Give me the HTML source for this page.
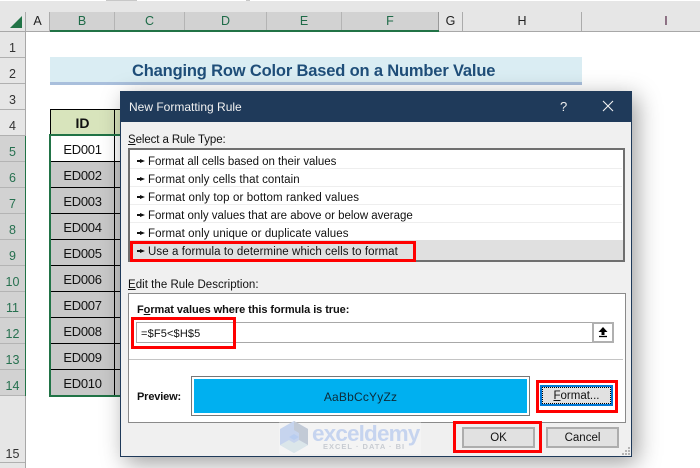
<!DOCTYPE html>
<html><head><meta charset="utf-8"><style>
html,body{margin:0;padding:0}
body{width:700px;height:468px;overflow:hidden;background:#fff;position:relative;font-family:"Liberation Sans",sans-serif}
div{position:absolute;box-sizing:border-box;white-space:nowrap}
.ch{top:12px;height:19px;background:#e6e6e6;border-right:1px solid #ababab;text-align:center;font-size:12.5px;line-height:19px;color:#222}
.s{background:#d2d2d2;color:#1f6b48;border-right:1px solid #b4b4b4}
.rh{left:0;width:25px;background:#e6e6e6;border-bottom:1px solid #b0b0b0;text-align:center;font-size:12.5px;color:#333;padding-top:8px;line-height:17px}
.rs{background:#d2d2d2;color:#26704f;border-bottom:1px solid #b4b4b4}
.cell{left:51px;width:63px;height:26px;background:#c8c8c8;border-bottom:1px solid #000;text-align:center;font-size:13px;line-height:27px;color:#111;letter-spacing:-.3px}
.c2{left:114px;width:6px;height:26px;background:#c8c8c8;border-left:1px solid #000;border-bottom:1px solid #000}
.t{font-size:11.5px;color:#111;line-height:14px}
.li{left:148px;height:18px;line-height:18px;font-size:11.5px;color:#111}
.sep{left:130px;width:492px;height:1px;background:#eee}
.red{border:3px solid #f00;background:transparent}
.btn{background:#e1e1e1;border:2px solid #adadad;text-align:center;font-size:11.5px;line-height:19px;color:#111}
</style></head><body>
<!-- top strip -->
<div style="left:0;top:0;width:700px;height:12px;background:#e6e6e6"></div>
<div style="left:0;top:0;width:700px;height:1px;background:#c8c8c8"></div>
<div style="left:0;top:0;width:106px;height:1px;background:#fff"></div>
<div style="left:137px;top:0;width:109px;height:1px;background:#fff"></div>
<div style="left:250px;top:0;width:450px;height:1px;background:#fff"></div>
<div style="left:0;top:12px;width:26px;height:19px;background:#e6e6e6;border-right:1px solid #ababab"></div>
<svg style="position:absolute;left:10px;top:16px" width="12" height="12"><path d="M12 0V12H0Z" fill="#217346"/></svg>
<div class="ch" style="left:26px;width:24px">A</div>
<div class="ch s" style="left:50px;width:65px">B</div>
<div class="ch s" style="left:115px;width:70px">C</div>
<div class="ch s" style="left:185px;width:82px">D</div>
<div class="ch s" style="left:267px;width:75px">E</div>
<div class="ch s" style="left:342px;width:97px;border-right:1px solid #999">F</div>
<div class="ch" style="left:439px;width:24px">G</div>
<div class="ch" style="left:463px;width:119px">H</div>
<div class="ch" style="left:582px;width:118px;border-right:0;padding-left:50px;color:#502040">I</div>
<div style="left:0;top:31px;width:700px;height:1px;background:#a8a8a8"></div>
<div style="left:50px;top:30px;width:389px;height:2px;background:#217346"></div>
<!-- row headers -->
<div class="rh" style="top:32px;height:26px">1</div>
<div class="rh" style="top:58px;height:26px">2</div>
<div class="rh" style="top:84px;height:26px">3</div>
<div class="rh" style="top:110px;height:26px">4</div>
<div class="rh rs" style="top:136px;height:26px">5</div>
<div class="rh rs" style="top:162px;height:26px">6</div>
<div class="rh rs" style="top:188px;height:26px">7</div>
<div class="rh rs" style="top:214px;height:26px">8</div>
<div class="rh rs" style="top:240px;height:26px">9</div>
<div class="rh rs" style="top:266px;height:26px">10</div>
<div class="rh rs" style="top:292px;height:26px">11</div>
<div class="rh rs" style="top:318px;height:26px">12</div>
<div class="rh rs" style="top:344px;height:26px">13</div>
<div class="rh rs" style="top:370px;height:26px">14</div>
<div class="rh" style="top:396px;height:67px;padding-top:50px">15</div>
<div class="rh" style="top:463px;height:5px;border:0;padding:0"></div>
<div style="left:25px;top:32px;width:1px;height:436px;background:#a8a8a8"></div>
<div style="left:24.5px;top:136px;width:1.5px;height:260px;background:#217346"></div>
<!-- title band -->
<div style="left:50px;top:57px;width:532px;height:28px;background:#daedf3;border-bottom:3px solid #a9bfdc"></div>
<div style="left:132px;top:57px;height:28px;font-size:16.5px;font-weight:bold;line-height:29px;color:#1f4e79;letter-spacing:-.17px">Changing Row Color Based on a Number Value</div>
<!-- table -->
<div style="left:50px;top:109px;width:65px;height:27px;background:#d8e4bc;border:1px solid #000;text-align:center;font-weight:bold;font-size:14px;line-height:27px;color:#111">ID</div>
<div style="left:114px;top:109px;width:8px;height:27px;background:#d8e4bc;border:1px solid #000;border-right:0"></div>
<div class="cell" style="top:136px;background:#fff">ED001</div><div class="c2" style="top:136px;background:#fff"></div>
<div class="cell" style="top:162px">ED002</div><div class="c2" style="top:162px"></div>
<div class="cell" style="top:188px">ED003</div><div class="c2" style="top:188px"></div>
<div class="cell" style="top:214px">ED004</div><div class="c2" style="top:214px"></div>
<div class="cell" style="top:240px">ED005</div><div class="c2" style="top:240px"></div>
<div class="cell" style="top:266px">ED006</div><div class="c2" style="top:266px"></div>
<div class="cell" style="top:292px">ED007</div><div class="c2" style="top:292px"></div>
<div class="cell" style="top:318px">ED008</div><div class="c2" style="top:318px"></div>
<div class="cell" style="top:344px">ED009</div><div class="c2" style="top:344px"></div>
<div class="cell" style="top:370px">ED010</div><div class="c2" style="top:370px"></div>
<div style="left:49px;top:134px;width:73px;height:263px;border:2px solid #217346;border-right:0"></div>
<!-- dialog -->
<div style="left:120px;top:91px;width:512px;height:366px;background:#f0f0f0;border:1px solid #1f3a5a;box-shadow:5px 6px 22px rgba(0,0,0,.38)"></div>
<div style="left:120px;top:91px;width:512px;height:31px;background:#1f3a5a;color:#f2f2f2;font-size:12px;line-height:33px;padding-left:9px">New Formatting Rule</div>
<div style="left:560px;top:91px;height:31px;line-height:31px;font-size:13px;color:#eee">?</div>
<svg style="position:absolute;left:602px;top:100px" width="12" height="12"><path d="M1 1L11 11M11 1L1 11" stroke="#f2f2f2" stroke-width="1.1" fill="none"/></svg>
<div class="t" style="left:128px;top:133px;letter-spacing:-.1px"><u>S</u>elect a Rule Type:</div>
<div style="left:127.5px;top:148px;width:497.5px;height:114px;background:#fff;border:2px solid #6f6f6f"></div>
<div style="left:130px;top:240px;width:493px;height:20px;background:#e0e0e0"></div>
<div class="sep" style="top:168px"></div><div class="sep" style="top:186px"></div><div class="sep" style="top:204px"></div><div class="sep" style="top:222px"></div>
<svg style="position:absolute;left:137px;top:158px" width="8" height="7"><path d="M0 2H3V1L8 3L3 5V4H0Z" fill="#111"/></svg>
<svg style="position:absolute;left:137px;top:176px" width="8" height="7"><path d="M0 2H3V1L8 3L3 5V4H0Z" fill="#111"/></svg>
<svg style="position:absolute;left:137px;top:194px" width="8" height="7"><path d="M0 2H3V1L8 3L3 5V4H0Z" fill="#111"/></svg>
<svg style="position:absolute;left:137px;top:212px" width="8" height="7"><path d="M0 2H3V1L8 3L3 5V4H0Z" fill="#111"/></svg>
<svg style="position:absolute;left:137px;top:230px" width="8" height="7"><path d="M0 2H3V1L8 3L3 5V4H0Z" fill="#111"/></svg>
<svg style="position:absolute;left:137px;top:248px" width="8" height="7"><path d="M0 2H3V1L8 3L3 5V4H0Z" fill="#111"/></svg>
<div class="li" style="top:153px;letter-spacing:-.04px">Format all cells based on their values</div>
<div class="li" style="top:171px;letter-spacing:.07px">Format only cells that contain</div>
<div class="li" style="top:189px;letter-spacing:.12px">Format only top or bottom ranked values</div>
<div class="li" style="top:207px;letter-spacing:-.01px">Format only values that are above or below average</div>
<div class="li" style="top:225px;letter-spacing:.08px">Format only unique or duplicate values</div>
<div class="li" style="top:243px;letter-spacing:.08px">Use a formula to determine which cells to format</div>
<div class="red" style="left:130px;top:241px;width:286px;height:21px"></div>
<div class="t" style="left:128px;top:278px;letter-spacing:.03px"><u>E</u>dit the Rule Description:</div>
<div style="left:127.5px;top:293px;width:498px;height:130px;background:#fff;border:1px solid #8a8a8a"></div>
<div class="t" style="left:137px;top:303px;font-size:11px;font-weight:bold;letter-spacing:-.07px">F<u>o</u>rmat values where this formula is true:</div>
<div style="left:136px;top:322px;width:478px;height:21px;background:#fff;border:1px solid #a8a8a8;font-size:11px;line-height:22px;padding-left:4px;color:#111;letter-spacing:.15px">=$F5&lt;$H$5</div>
<div style="left:592px;top:322px;width:22px;height:21px;background:#fff;border:2px solid #b0b0b0"></div>
<svg style="position:absolute;left:597px;top:326px" width="12" height="12"><path d="M6 1L10.5 6H7.5V9H4.5V6H1.5Z" fill="#000"/><path d="M2 10.5H10" stroke="#000" stroke-width="1.3"/></svg>
<div class="red" style="left:131px;top:317px;width:105px;height:32px"></div>
<div style="left:129px;top:359px;width:494px;height:1px;background:#c4c4c4"></div>
<div class="t" style="left:137px;top:390px;font-size:11px;font-weight:bold;letter-spacing:-.15px">Preview:</div>
<div style="left:191px;top:376px;width:339px;height:40px;background:#fff;border:1px solid #777"></div>
<div style="left:194px;top:379px;width:333px;height:34px;background:#00b0f0;text-align:center;font-size:12px;line-height:36px;color:#0c2a38;letter-spacing:.2px">AaBbCcYyZz</div>
<div style="left:540px;top:385px;width:73px;height:21px;background:#e1e1e1;border:2px solid #0078d7;text-align:center;font-size:11.5px;line-height:19px;color:#111"><u>F</u>ormat...</div>
<div style="left:542px;top:387px;width:69px;height:17px;border:1px dotted #000"></div>
<div class="red" style="left:536px;top:380px;width:82px;height:33px"></div>
<!-- watermark -->
<div style="left:279px;top:421px;width:142px;height:33px;background:rgba(255,255,255,.3)"></div>
<svg style="position:absolute;left:279px;top:421px" width="30" height="32"><path d="M15 0L29 8V24L15 32L1 24V8Z" fill="#c6d4ee"/><path d="M15 0L29 8V24L20 19V12L15 9Z" fill="#c2cad6"/><path d="M1 24L15 32L29 24L20 19L15 22L10 19Z" fill="#dbe6ea"/><path d="M10 16L15 13L20 16L15 19Z" fill="#b8cdf0"/></svg>
<div style="left:312px;top:420px;height:28px;font-size:22.5px;font-weight:bold;line-height:28px;color:#c6d4ef;letter-spacing:-.85px">exceldemy</div>
<div style="left:323px;top:442px;height:10px;font-size:7.5px;font-weight:bold;line-height:10px;color:#c8ccd2;letter-spacing:1px">EXCEL · DATA · BI</div>
<!-- buttons -->
<div class="btn" style="left:462px;top:427px;width:73px;height:21px">OK</div>
<div class="btn" style="left:546px;top:427px;width:73px;height:21px">Cancel</div>
<div class="red" style="left:453px;top:421px;width:89px;height:32px"></div>
<svg style="position:absolute;left:621px;top:446px" width="10" height="10"><path d="M7 1h2v2h-2zM4 4h2v2h-2zM7 4h2v2h-2zM1 7h2v2h-2zM4 7h2v2h-2zM7 7h2v2h-2z" fill="#b4b4b4"/></svg>
</body></html>
